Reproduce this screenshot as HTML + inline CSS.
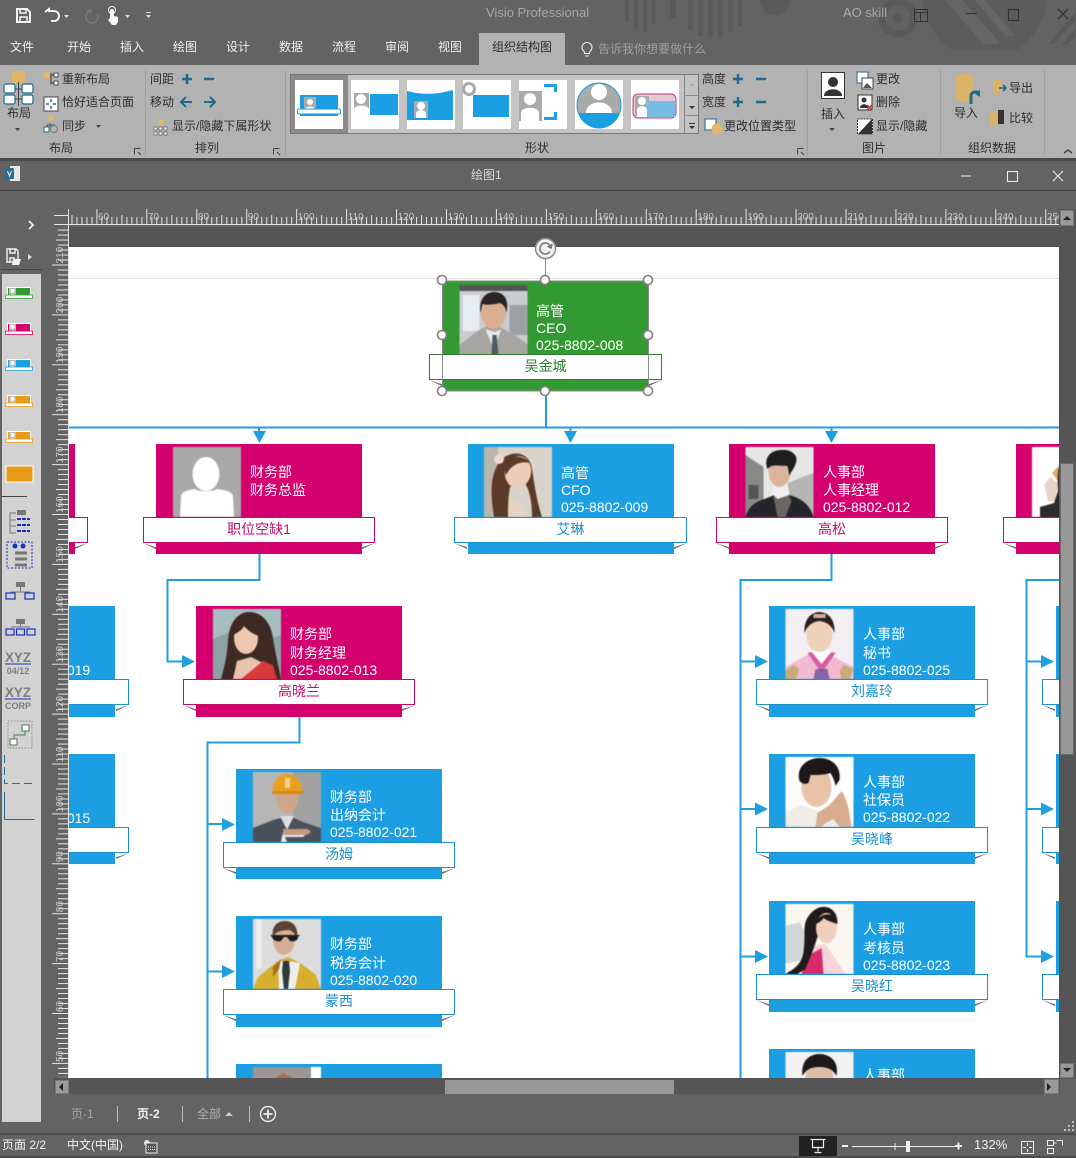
<!DOCTYPE html>
<html><head><meta charset="utf-8"><title>Visio Professional</title>
<style>
*{box-sizing:border-box}
html,body{margin:0;padding:0}
body{width:1076px;height:1158px;background:#636363;position:relative;overflow:hidden;font-family:"Liberation Sans","Noto Sans CJK SC",sans-serif;font-size:12px;color:#2e2e2e}
.a{position:absolute}
.t{position:absolute;white-space:nowrap;line-height:16px}
.w{color:#efefef}
.c{position:absolute;width:206px;height:110px}
.c.bl{background:#1b9fe2;color:#1b8fcf;border-color:#1b8fcf}
.c.pk{background:#d3006e;color:#c20a6c}
.c.gr{background:#339933;color:#2f7d2f}
.c.h{height:111px}
.c .ph{position:absolute;left:17px;top:3px;width:68px;height:70px;display:block;filter:blur(.4px)}
.c .l{position:absolute;left:94px;font-size:14px;line-height:18px;color:#fff;white-space:nowrap}
.c .l1{top:19px}.c .l2{top:37px}.c .l3{top:54px}
.c .b{position:absolute;left:-13px;top:73px;width:232px;height:26px;background:#fff;border:1px solid currentColor;text-align:center;font-size:14px;line-height:23px}
.c .b i{position:absolute;top:25px;width:13px;height:6px;background:#666}
.c .b i.x{left:-1px;clip-path:polygon(0 0,100% 70%,100% 100%)}
.c .b i.y{right:-1px;clip-path:polygon(100% 0,0 70%,0 100%)}
</style></head><body>

<!-- title bar decoration -->
<svg class="a" style="left:600px;top:0" width="476" height="65" viewBox="0 0 476 65">
<g fill="#5a5a5a">
<path d="M25 0h4v22h-4zM34 0h4v28h-4zM43 0h4v32h-4zM52 0h3v24h-3zM70 0h6v18h-6zM88 0h5v30h-5zM98 0h5v36h-5zM108 0h5v36h-5zM118 0h5v36h-5zM128 0h5v32h-5zM138 0h4v26h-4z"/>
<path d="M160 0h30a15 15 0 0 1-30 0z"/>
<circle cx="298" cy="18" r="16" fill="none" stroke="#5a5a5a" stroke-width="7"/>
<circle cx="298" cy="18" r="5"/>
<path d="M322 0h125a70 70 0 0 1-30 50h-65a70 70 0 0 1-30-50z" fill="#5c5c5c"/>
<path d="M345 0l38 44h18L362 0zM375 0l30 36h10L385 0z" fill="#666"/>
<path d="M476 12L448 44h6l22-24zM476 28l-14 16h6l8-8z"/>
</g></svg>

<!-- quick access toolbar -->
<svg class="a" style="left:14px;top:6px" width="150" height="20" viewBox="0 0 150 20">
<g fill="none" stroke="#f4f4f4" stroke-width="2"><path d="M3 3h10l3 3v10H3z"/><path d="M6 3v4h6V3M6 16v-5h7v5" stroke-width="1.500"/></g>
<path d="M33 6l4-3v2h5a5 5 0 0 1 0 10h-3" fill="none" stroke="#f4f4f4" stroke-width="2" transform="translate(-2 0)"/>
<path d="M50 9h5l-2.500 3z" fill="#e0e0e0"/>
<path d="M78 5a6 6 0 1 0 5 3M73 4l3 2v-3" fill="none" stroke="#777" stroke-width="1.500"/>
<path d="M96 12V5a2 2 0 0 1 4 0v5l4 1v5l-2 3h-4l-4-5z" fill="#f4f4f4"/><circle cx="98" cy="4" r="3.500" fill="none" stroke="#f4f4f4"/>
<path d="M111 9h5l-2.500 3z" fill="#e0e0e0"/>
<path d="M132 6h5v1h-5zM132 9h5l-2.500 3z" fill="#e0e0e0"/>
</svg>
<div class="t" style="left:486px;top:5px;font-size:13px;color:#a9a9a9">Visio Professional</div>
<div class="t" style="left:843px;top:5px;font-size:13px;color:#aaa">AO skill</div>
<svg class="a" style="left:910px;top:4px" width="166" height="20" viewBox="0 0 166 20" fill="none" stroke="#333" stroke-width="1">
<path d="M4.500 5.500h13v12h-13zM4.500 8.500h13M10.500 8.500v9"/><path d="M56 9.500h11" stroke-width="1.200"/><path d="M98.500 5.500h10v11h-10z" stroke-width="1.200"/><path d="M148 5l10 10M158 5l-10 10" stroke-width="1.300"/>
</svg>

<!-- tabs -->
<div class="t w" style="left:10px;top:39px">文件</div>
<div class="t w" style="left:67px;top:39px">开始</div>
<div class="t w" style="left:120px;top:39px">插入</div>
<div class="t w" style="left:173px;top:39px">绘图</div>
<div class="t w" style="left:226px;top:39px">设计</div>
<div class="t w" style="left:279px;top:39px">数据</div>
<div class="t w" style="left:332px;top:39px">流程</div>
<div class="t w" style="left:385px;top:39px">审阅</div>
<div class="t w" style="left:438px;top:39px">视图</div>
<div class="a" style="left:479px;top:33px;width:86px;height:32px;background:#b2b2b2"></div>
<div class="t" style="left:492px;top:39px">组织结构图</div>
<svg class="a" style="left:580px;top:41px" width="14" height="17" viewBox="0 0 14 17" fill="none" stroke="#eee" stroke-width="1.100"><path d="M4.500 11C3 9.500 2 8.500 2 6.500a5 5 0 0 1 10 0c0 2-1 3-2.500 4.500v1.500h-5zM5 15h4"/></svg>
<div class="t" style="left:598px;top:41px;color:#a0a0a0">告诉我你想要做什么</div>

<!-- ribbon -->
<div class="a" style="left:0;top:65px;width:1076px;height:93px;background:#b2b2b2"></div>
<div class="a" style="left:0;top:158px;width:1076px;height:3px;background:#4a4a4a"></div>
<div class="a" style="left:145px;top:70px;width:1px;height:86px;background:#a0a0a0"></div>
<div class="a" style="left:285px;top:70px;width:1px;height:86px;background:#a0a0a0"></div>
<div class="a" style="left:807px;top:70px;width:1px;height:86px;background:#a0a0a0"></div>
<div class="a" style="left:940px;top:70px;width:1px;height:86px;background:#a0a0a0"></div>
<div class="a" style="left:1044px;top:70px;width:1px;height:86px;background:#a0a0a0"></div>

<!-- layout group -->
<svg class="a" style="left:0;top:68px" width="145" height="68" viewBox="0 0 145 68">
<rect x="12" y="3" width="13" height="12" rx="2" fill="#e2b868"/>
<g fill="#fff" stroke="#1f6a8c" stroke-width="1.200"><rect x="4" y="16" width="11" height="9" rx="2"/><rect x="22" y="16" width="11" height="9" rx="2"/><rect x="4" y="27" width="11" height="9" rx="2"/><rect x="22" y="27" width="11" height="9" rx="2"/></g>
<path d="M18.500 14v24M15 21h7M15 31h7" stroke="#444" fill="none"/>
<path d="M15 60h5l-2.500 3z" fill="#444"/>
<circle cx="47" cy="7" r="3.500" fill="#e2b868"/><path d="M51 5v11M51 7h3M51 15h3" stroke="#333" fill="none"/><rect x="54" y="5" width="4" height="4" fill="#fff" stroke="#333" stroke-width=".8"/><rect x="54" y="13" width="4" height="4" fill="#fff" stroke="#333" stroke-width=".8"/>
<rect x="44" y="29" width="14" height="14" fill="#fff" stroke="#444"/><path d="M51 31v3M51 38v3M46 36h3M53 36h3" stroke="#1f6a8c" stroke-width="1.500"/>
<circle cx="51" cy="50" r="3" fill="#e2b868"/><rect x="44" y="59" width="5" height="5" fill="#fff" stroke="#1f6a8c"/><path d="M50 55v4M47 59v-2h8" stroke="#555" fill="none"/><circle cx="54" cy="61" r="3.500" fill="none" stroke="#777"/>
<path d="M96 61h5l-2.500 3z" transform="translate(0 -4)" fill="#444"/>
</svg>
<div class="t" style="left:7px;top:105px">布局</div>
<div class="t" style="left:62px;top:71px">重新布局</div>
<div class="t" style="left:62px;top:94px">恰好适合页面</div>
<div class="t" style="left:62px;top:118px">同步</div>
<div class="t" style="left:49px;top:140px">布局</div>
<div class="t" style="left:195px;top:140px">排列</div>
<div class="t" style="left:525px;top:140px">形状</div>
<div class="t" style="left:862px;top:140px">图片</div>
<div class="t" style="left:968px;top:140px">组织数据</div>
<svg class="a" style="left:0;top:146px" width="1076" height="12" viewBox="0 0 1076 12" fill="none" stroke="#444" stroke-width="1">
<path d="M134.500 2.500h6M134.500 2.500v6M138 6l3 3" /><path d="M273.500 2.500h6M273.500 2.500v6M277 6l3 3"/><path d="M797.500 2.500h6M797.500 2.500v6M801 6l3 3"/><path d="M1064 7l4-3 4 3" stroke-width="1.500"/>
</svg>

<!-- arrange group -->
<div class="t" style="left:150px;top:71px">间距</div>
<div class="t" style="left:150px;top:94px">移动</div>
<svg class="a" style="left:178px;top:70px" width="42" height="42" viewBox="0 0 42 42" fill="none" stroke="#1f6a8c" stroke-width="2.600">
<path d="M9 4v10M4 9h10M26 9h10"/><path d="M14 32H4M8 27l-5 5 5 5M26 32h10M32 27l5 5-5 5" stroke-width="2"/></svg>
<svg class="a" style="left:152px;top:118px" width="18" height="18" viewBox="0 0 18 18"><circle cx="9" cy="4" r="3" fill="#e2b868"/><g fill="#fff" stroke="#444" stroke-width=".6"><rect x="2" y="9" width="3" height="3"/><rect x="7" y="9" width="3" height="3"/><rect x="12" y="9" width="3" height="3"/><rect x="2" y="14" width="3" height="3"/><rect x="7" y="14" width="3" height="3"/><rect x="12" y="14" width="3" height="3"/></g></svg>
<div class="t" style="left:172px;top:118px">显示/隐藏下属形状</div>

<!-- gallery -->
<div class="a" style="left:290px;top:74px;width:409px;height:60px;background:#c4c4c4;border:1px solid #777"></div>
<div class="a" style="left:291px;top:75px;width:57px;height:58px;background:#8a8a8a"></div>
<div class="a" style="left:295px;top:80px;width:48px;height:49px;background:#fff"></div>
<div class="a" style="left:351px;top:80px;width:48px;height:49px;background:#fff"></div>
<div class="a" style="left:407px;top:80px;width:48px;height:49px;background:#fff"></div>
<div class="a" style="left:463px;top:80px;width:48px;height:49px;background:#fff"></div>
<div class="a" style="left:519px;top:80px;width:48px;height:49px;background:#fff"></div>
<div class="a" style="left:575px;top:80px;width:48px;height:49px;background:#fff"></div>
<div class="a" style="left:631px;top:80px;width:48px;height:49px;background:#fff"></div>
<svg class="a" style="left:290px;top:75px" width="410" height="58" viewBox="0 0 410 58">
<!-- t1 -->
<rect x="10" y="20" width="38" height="21" fill="#1b9fe2"/><rect x="14" y="22" width="12" height="15" fill="#aaa"/><circle cx="20" cy="27" r="3" fill="#fff"/><path d="M16 37v-4c0-2 8-2 8 0v4z" fill="#fff"/><rect x="7.500" y="34" width="43" height="5" rx="1" fill="#fff" stroke="#1b9fe2"/>
<!-- t2 -->
<rect x="80" y="19" width="28" height="21" fill="#1b9fe2"/><rect x="64" y="18" width="15" height="22" fill="#aaa"/><circle cx="71" cy="24" r="5" fill="#fff"/><path d="M64 40v-5c0-6 15-6 15 0v5z" fill="#fff"/>
<!-- t3 -->
<path d="M118 16q22 6 46-1v30h-46z" fill="#1b9fe2" transform="translate(-1 0)"/><rect x="124" y="26" width="14" height="17" fill="#aaa"/><circle cx="131" cy="31" r="4" fill="#fff"/><path d="M126 43v-4c0-5 10-5 10 0v4z" fill="#fff"/>
<!-- t4 -->
<rect x="186" y="20" width="36" height="22" fill="#1b9fe2" transform="translate(-3 0)"/><circle cx="182" cy="14" r="7" fill="#aaa" transform="translate(-3 0)"/><circle cx="179" cy="14" r="4" fill="#fff"/>
<!-- t5 -->
<rect x="229" y="16" width="23" height="30" fill="#aaa"/><circle cx="240" cy="24" r="6" fill="#fff"/><path d="M231 46V38c0-7 18-7 18 0v8z" fill="#fff"/><path d="M254 9h12v3h-12zM254 42h12v3h-12zM264 9h3v8h-3zM264 37h3v8h-3z" fill="#1b9fe2"/>
<!-- t6 -->
<circle cx="309" cy="30" r="22" fill="#aaa" stroke="#1b9fe2"/><path d="M288 38h42a22 22 0 0 1-42 0z" fill="#1b9fe2"/><circle cx="309" cy="17" r="8" fill="#fff"/><path d="M296 38c0-14 26-14 26 0z" fill="#fff"/>
<!-- t7 -->
<rect x="343" y="19" width="43" height="24" rx="5" fill="#e6c7d6" stroke="#c2377f" stroke-width="1"/><rect x="345" y="21" width="14" height="20" fill="#aaa"/><rect x="356" y="26" width="29" height="16" fill="#76bde2"/><circle cx="352" cy="26" r="4" fill="#fff"/><path d="M347 42v-7c0-5 10-5 10 0v7z" fill="#fff"/>
</svg>
<div class="a" style="left:684px;top:75px;width:14px;height:58px;background:#c4c4c4;border-left:1px solid #888"></div>
<div class="a" style="left:684px;top:95px;width:14px;height:1px;background:#888"></div>
<div class="a" style="left:684px;top:115px;width:14px;height:1px;background:#888"></div>
<svg class="a" style="left:684px;top:75px" width="15" height="58" viewBox="0 0 15 58"><path d="M5 11h6l-3-3z" fill="#aaa"/><path d="M5 31h6l-3 3z" fill="#333"/><path d="M5 48h6v1H5zM5 51h6l-3 3z" fill="#333"/></svg>

<!-- size -->
<div class="t" style="left:702px;top:71px">高度</div>
<div class="t" style="left:702px;top:94px">宽度</div>
<svg class="a" style="left:730px;top:70px" width="40" height="40" viewBox="0 0 40 40" fill="none" stroke="#1f6a8c" stroke-width="2.400"><path d="M8 4v10M3 9h10M26 9h10M8 27v10M3 32h10M26 32h10"/></svg>
<svg class="a" style="left:704px;top:118px" width="20" height="17" viewBox="0 0 20 17"><rect x="1" y="1" width="11" height="11" fill="#fff" stroke="#1f6a8c"/><circle cx="13" cy="11" r="5.500" fill="#e2b868"/></svg>
<div class="t" style="left:724px;top:118px">更改位置类型</div>

<!-- picture -->
<svg class="a" style="left:820px;top:72px" width="28" height="30" viewBox="0 0 28 30"><rect x=".5" y="3.500" width="23" height="26" fill="#fff" stroke="#333" transform="translate(1 -3)"/><circle cx="13" cy="10" r="5" fill="#333"/><path d="M4 24c0-9 18-9 18 0z" fill="#333"/></svg>
<div class="t" style="left:821px;top:106px">插入</div>
<svg class="a" style="left:829px;top:128px" width="8" height="5" viewBox="0 0 8 5"><path d="M0 0h6L3 3z" fill="#444"/></svg>
<svg class="a" style="left:856px;top:71px" width="18" height="66" viewBox="0 0 18 66">
<rect x="1" y="1" width="11" height="11" fill="#fff" stroke="#1f6a8c"/><rect x="6" y="7" width="11" height="11" fill="#fff" stroke="#444"/><path d="M7 17l4-5 5 5z" fill="#555"/>
<rect x="2" y="24" width="14" height="15" fill="#fff" stroke="#333"/><circle cx="8" cy="29" r="2.500" fill="#333"/><path d="M4 37c0-5 8-5 8 0z" fill="#333"/><path d="M11 34l5 5M16 34l-5 5" stroke="#c33" stroke-width="1.500"/>
<rect x="1.500" y="48" width="15" height="15" fill="#fff" stroke="#333" stroke-dasharray="2 1"/><path d="M2 63L16 48v15z" fill="#333"/>
</svg>
<div class="t" style="left:876px;top:71px">更改</div>
<div class="t" style="left:876px;top:94px">删除</div>
<div class="t" style="left:876px;top:118px">显示/隐藏</div>

<!-- org data -->
<svg class="a" style="left:953px;top:72px" width="85" height="60" viewBox="0 0 85 60">
<path d="M3 5c0-4 18-4 18 0v22c0 4-18 4-18 0z" fill="#d9b36a"/><path d="M18 32v-8c0-4 5-5 7-3" fill="none" stroke="#1f6a8c" stroke-width="3"/><path d="M21 21l6-3 0 7z" fill="#1f6a8c"/>
<path d="M40 9c0-3 9-3 9 0v11c0 3-9 3-9 0z" fill="#d9b36a"/><path d="M46 16h6M50 13l3 3-3 3" fill="none" stroke="#1f6a8c" stroke-width="1.600"/>
<path d="M37 42c0-3 8-3 8 0v10c0 3-8 3-8 0z" fill="#d9b36a"/><rect x="45" y="38" width="6" height="14" fill="#333"/>
</svg>
<div class="t" style="left:954px;top:105px">导入</div>
<div class="t" style="left:1009px;top:80px">导出</div>
<div class="t" style="left:1009px;top:110px">比较</div>

<!-- doc title bar -->
<svg class="a" style="left:5px;top:165px" width="16" height="18" viewBox="0 0 16 18"><rect x="5" y="1" width="10" height="15" fill="#e8e8e8"/><rect x="0" y="3" width="9" height="11" rx="1" fill="#2a6c93"/><path d="M2.500 6l2 5 2-5" fill="none" stroke="#fff" stroke-width="1"/></svg>
<div class="t" style="left:471px;top:167px;color:#d8d8d8">绘图1</div>
<svg class="a" style="left:950px;top:166px" width="126" height="20" viewBox="0 0 126 20" fill="none" stroke="#ececec" stroke-width="1.100"><path d="M11 10h10"/><path d="M57.500 5.500h10v10h-10z"/><path d="M103 5l10 10M113 5l-10 10"/></svg>
<div class="a" style="left:0;top:190px;width:1076px;height:1px;background:#444"></div>

<!-- left panel -->
<svg class="a" style="left:27px;top:220px" width="10" height="10" viewBox="0 0 10 10"><path d="M2 1l4 4-4 4" fill="none" stroke="#eee" stroke-width="1.800"/></svg>
<svg class="a" style="left:5px;top:247px" width="30" height="20" viewBox="0 0 30 20"><g fill="none" stroke="#f2f2f2" stroke-width="1.400"><path d="M2 2h9l2 2v11H2z"/><path d="M5 2v4h5V2M5 15v-4h5"/></g><path d="M8 12h8l-2 6H7z" fill="#f2f2f2"/><path d="M23 7l4 3-4 3z" fill="#ddd"/></svg>
<div class="a" style="left:1px;top:269px;width:41px;height:1px;background:#444"></div>
<div class="a" style="left:2px;top:274px;width:39px;height:848px;background:#d2d2d2"></div>
<svg class="a" style="left:2px;top:274px" width="40" height="560" viewBox="0 0 40 560">
<g><rect x="5" y="13" width="24" height="11" fill="#fff"/><rect x="6" y="14" width="22" height="9" fill="#339933"/><rect x="7" y="14" width="7" height="9" fill="#bbb"/><circle cx="10.500" cy="17" r="2" fill="#fff"/><path d="M8 23c0-4 5-4 5 0z" fill="#fff"/><rect x="3.500" y="21" width="27" height="3.500" fill="#fff" stroke="#339933" stroke-width=".8"/></g>
<g transform="translate(0 36)"><rect x="5" y="13" width="24" height="11" fill="#fff"/><rect x="6" y="14" width="22" height="9" fill="#d3006e"/><rect x="7" y="14" width="7" height="9" fill="#bbb"/><circle cx="10.500" cy="17" r="2" fill="#fff"/><path d="M8 23c0-4 5-4 5 0z" fill="#fff"/><rect x="3.500" y="21" width="27" height="3.500" fill="#fff" stroke="#d3006e" stroke-width=".8"/></g>
<g transform="translate(0 72)"><rect x="5" y="13" width="24" height="11" fill="#fff"/><rect x="6" y="14" width="22" height="9" fill="#1b9fe2"/><rect x="7" y="14" width="7" height="9" fill="#bbb"/><circle cx="10.500" cy="17" r="2" fill="#fff"/><path d="M8 23c0-4 5-4 5 0z" fill="#fff"/><rect x="3.500" y="21" width="27" height="3.500" fill="#fff" stroke="#1b9fe2" stroke-width=".8"/></g>
<g transform="translate(0 108)"><rect x="5" y="13" width="24" height="11" fill="#fff"/><rect x="6" y="14" width="22" height="9" fill="#e99a16"/><rect x="7" y="14" width="7" height="9" fill="#bbb"/><circle cx="10.500" cy="17" r="2" fill="#fff"/><path d="M8 23c0-4 5-4 5 0z" fill="#fff"/><rect x="3.500" y="21" width="27" height="3.500" fill="#fff" stroke="#e99a16" stroke-width=".8"/></g>
<g transform="translate(0 144)"><rect x="5" y="13" width="24" height="11" fill="#fff"/><rect x="6" y="14" width="22" height="9" fill="#e99a16"/><rect x="7" y="14" width="7" height="9" fill="#bbb"/><circle cx="10.500" cy="17" r="2" fill="#fff"/><path d="M8 23c0-4 5-4 5 0z" fill="#fff"/><rect x="3.500" y="21" width="27" height="3.500" fill="#fff" stroke="#e99a16" stroke-width=".8"/></g>
<rect x="4" y="192" width="27" height="16" fill="#e99a16" stroke="#fff"/>
<path d="M-2 222.500h27" stroke="#444"/>
<!-- tree -->
<rect x="15" y="236" width="9" height="5" fill="#777"/><path d="M14 239H8v20h6M8 246h6M8 252h6" fill="none" stroke="#777"/><path d="M15 245h13M15 251h13M15 257h13" stroke="#1b30c0" stroke-width="2" stroke-dasharray="4 1"/>
<rect x="5" y="268" width="25" height="26" fill="none" stroke="#1b30c0" stroke-dasharray="2 1.500"/><circle cx="13" cy="272" r="2.500" fill="#1b30c0"/><circle cx="21" cy="272" r="2.500" fill="#1b30c0"/><path d="M13 279h12M13 285h12M13 291h12" stroke="#777" stroke-width="3"/>
<!-- horiz -->
<rect x="14" y="308" width="9" height="5" fill="#777"/><path d="M18.500 313v5M9 318h19" stroke="#777"/><rect x="4" y="319" width="9" height="6" fill="none" stroke="#1b30c0" stroke-width="1.200"/><rect x="23" y="319" width="9" height="6" fill="none" stroke="#1b30c0" stroke-width="1.200"/>
<rect x="14" y="345" width="9" height="5" fill="#777"/><path d="M18.500 350v3M9 353h19" stroke="#777"/><rect x="4" y="355" width="8" height="6" fill="none" stroke="#1b30c0" stroke-width="1.200"/><rect x="14.500" y="355" width="8" height="6" fill="none" stroke="#1b30c0" stroke-width="1.200"/><rect x="25" y="355" width="8" height="6" fill="none" stroke="#1b30c0" stroke-width="1.200"/>
<path d="M3 390h26M3 425h26" stroke="#1b30c0" stroke-width="1"/>
<!-- group -->
<rect x="6" y="447" width="24" height="27" fill="none" stroke="#888" stroke-dasharray="1.500 1.500"/><rect x="20" y="451" width="7" height="6" fill="#fff" stroke="#4a7a4a"/><rect x="8" y="465" width="7" height="6" fill="#fff" stroke="#4a7a4a"/><path d="M23 457v4H12v4" fill="none" stroke="#4a7a4a"/>
<!-- callouts -->
<path d="M2.500 481v28.500h30" fill="none" stroke="#2d6e8e" stroke-dasharray="8 4"/><path d="M2.500 518v27.500h30" fill="none" stroke="#2d6e8e"/>
<text x="16" y="388" text-anchor="middle" font-family="Liberation Sans" font-size="14" font-weight="bold" fill="#7d7d7d" textLength="26" lengthAdjust="spacingAndGlyphs">XYZ</text>
<text x="16" y="400" text-anchor="middle" font-family="Liberation Sans" font-size="9" font-weight="bold" fill="#7d7d7d">04/12</text>
<text x="16" y="423" text-anchor="middle" font-family="Liberation Sans" font-size="14" font-weight="bold" fill="#7d7d7d" textLength="26" lengthAdjust="spacingAndGlyphs">XYZ</text>
<text x="16" y="435" text-anchor="middle" font-family="Liberation Sans" font-size="9" font-weight="bold" fill="#7d7d7d">CORP</text>
</svg>

<!-- dark desk around page -->
<div class="a" style="left:54px;top:227px;width:1006px;height:851px;background:#555"></div>

<!-- canvas -->
<div class="a" style="left:69px;top:247px;width:990px;height:831px;background:#fff;overflow:hidden">
<div class="a" style="left:-69px;top:-247px;width:1076px;height:1158px">
<div class="a" style="left:69px;top:278px;width:990px;height:1px;background:#e2e2e2"></div>
<svg class="a" style="left:0;top:0" width="1076" height="1158" viewBox="0 0 1076 1158">
<g fill="none" stroke="#1f9fe0" stroke-width="2">
<path d="M69 427.500H1059M546 391v36M259 428v6M570.500 428v6M831.500 428v6"/>
<path d="M259.500 554v26H167.500v81.500H182"/>
<path d="M299.500 717v25.500H207.500V1080M207.500 824h16M207.500 971.500h16"/>
<path d="M831.500 554v26H740.500V1080M740.500 661.500h16M740.500 809h16M740.500 956.500h16"/>
<path d="M1060 580H1026.500V956.500h16M1026.500 661.500h16M1026.500 809h16"/>
</g>
<g fill="#1f9fe0">
<path d="M253 431h13l-6.500 12zM564 431h13l-6.500 12zM825 431h13l-6.500 12z"/>
<path d="M182 655v13l13-6.500zM222 818v13l13-6.500zM222 965v13l13-6.500zM755 655v13l13-6.500zM755 802.500v13l13-6.500zM755 950v13l13-6.500zM1041 655v13l13-6.500zM1041 802.500v13l13-6.500zM1041 950v13l13-6.500z"/>
</g>
</svg>

<!-- CEO -->
<div class="c gr" style="left:443px;top:281px">
<svg class="ph" style="left:16px;top:4px;width:69px" viewBox="0 0 68 70"><rect width="68" height="70" fill="#c9ccd0"/><rect width="68" height="6" fill="#555"/><rect x="3" y="10" width="17" height="36" fill="#e8edf2"/><rect x="50" y="20" width="18" height="30" fill="#9ea1a4"/><path d="M0 70V60l18-14 10-5h10l12 6 18 12v11z" fill="#a7a5a1"/><path d="M26 44l8 20 8-20-7 3z" fill="#e6e8ec"/><path d="M33 50h4l2 20h-7z" fill="#4f5a62"/><ellipse cx="34" cy="27" rx="12.500" ry="17" fill="#dcae90"/><path d="M21 28c-2-14 5-21 14-21s15 7 12 21c-1-7-4-9-7-10-6 2-14 2-17 1z" fill="#2a2423"/></svg>
<div class="l" style="left:93px;top:21px">高管</div><div class="l" style="left:93px;top:38px">CEO</div><div class="l" style="left:93px;top:55px">025-8802-008</div>
<div class="b" style="left:-14px;top:73px;width:233px"><i class="x"></i><i class="y"></i>吴金城</div>
</div>

<!-- row 1 -->
<div class="c pk" style="left:-131px;top:444px"><div class="b"><i class="x"></i><i class="y"></i></div></div>
<div class="c pk" style="left:156px;top:444px">
<svg class="ph" viewBox="0 0 68 70"><rect width="68" height="70" fill="#a9a9a9"/><ellipse cx="33" cy="27" rx="13.500" ry="17" fill="#fff"/><path d="M7 70l1-21c1-5 8-6 14-7 3 3 17 3 22 0 7 1 15 2 16 7l1 21z" fill="#fff"/></svg>
<div class="l l1">财务部</div><div class="l l2">财务总监</div>
<div class="b"><i class="x"></i><i class="y"></i>职位空缺1</div>
</div>
<div class="c bl" style="left:468px;top:444px">
<svg class="ph" style="left:16px" viewBox="0 0 68 70"><rect width="68" height="70" fill="#d8d4c9"/><rect width="14" height="70" fill="#b9b7ac"/><path d="M42 70c-5-20-22-22-28-10l-2 10z" fill="#e9d2bf"/><path d="M10 70c-4-25-4-45 8-58 12-10 28-6 30 10 2 12 4 30 10 48H48C48 50 44 40 40 35L26 40c-2 10-2 20-2 30z" fill="#5c3a28"/><ellipse cx="34" cy="25" rx="13" ry="16" fill="#efcdb8" transform="rotate(10 34 25)"/><path d="M20 20C22 8 38 6 46 16 38 14 28 16 22 28z" fill="#5c3a28"/><circle cx="15" cy="12" r="5" fill="#f0d8d0"/></svg>
<div class="l" style="left:93px;top:20px">高管</div><div class="l" style="left:93px;top:37px">CFO</div><div class="l" style="left:93px;top:54px">025-8802-009</div>
<div class="b" style="left:-14px;width:233px"><i class="x"></i><i class="y"></i>艾琳</div>
</div>
<div class="c pk" style="left:729px;top:444px">
<svg class="ph" style="left:16px;width:69px" viewBox="0 0 68 70"><rect width="68" height="70" fill="#e6e6e6"/><path d="M0 8l18 12v50H0z" fill="#888a85"/><rect x="3" y="38" width="10" height="14" fill="#555"/><path d="M42 36l26-10v44H42z" fill="#b5b5b3"/><path d="M0 70c4-14 14-16 24-20l10-4 10 2c10 3 20 8 24 22z" fill="#23252a"/><path d="M28 50c2-6 10-8 14-4l4 8-6 16H32z" fill="#6a6664"/><path d="M28 36l-2 10 6 6 12-4-2-12z" fill="#eee"/><ellipse cx="34" cy="24" rx="11" ry="16" fill="#dcb49c"/><path d="M22 22C18 12 24 3 36 3c10-1 18 6 14 14-2 6-5 8-6 12l-2-10c-6 0-12-1-16 0-2 1-3 2-4 3z" fill="#1e1e20"/></svg>
<div class="l l1">人事部</div><div class="l l2">人事经理</div><div class="l l3">025-8802-012</div>
<div class="b"><i class="x"></i><i class="y"></i>高松</div>
</div>
<div class="c pk" style="left:1016px;top:444px">
<svg class="ph" style="left:16px" viewBox="0 0 68 70"><rect width="68" height="70" fill="#fff"/><path d="M20 26l5-6 5 8-3 8z" fill="#e0b264"/><path d="M12 38l6-8 8 6-2 18h-8z" fill="#e7d3c8"/><path d="M8 70v-10l14-4 4-12c-1-20 0-30 8-36l34 0v62z" fill="#2c2c2e"/></svg>
<div class="b"><i class="x"></i><i class="y"></i></div>
</div>

<!-- left blue -->
<div class="c bl h" style="left:-91px;top:606px"><div class="l" style="left:112px;top:37px">理</div><div class="l l3" style="top:55px">025-8802-019</div><div class="b" style="width:233px"><i class="x"></i><i class="y"></i></div></div>
<div class="c bl" style="left:-91px;top:754px"><div class="l" style="left:112px;top:37px">师</div><div class="l l3" style="top:55px">025-8802-015</div><div class="b" style="width:233px"><i class="x"></i><i class="y"></i></div></div>

<!-- 高晓兰 -->
<div class="c pk h" style="left:196px;top:606px">
<svg class="ph" viewBox="0 0 68 70"><rect width="68" height="70" fill="#a6bec0"/><path d="M0 30l20-8 20 12 28-8v44H0z" fill="#8ba3a5"/><path d="M8 70c4-14 6-24 7-38C16 12 26 3 36 3c14 0 22 12 24 26 2 14 6 30 8 41H52L38 50 24 60l-2 10z" fill="#3e2a22"/><path d="M20 70l4-18 14-4 12 6 6 16z" fill="#e8c4ae"/><path d="M28 70l22-18 10 4 4 14z" fill="#d83a3c"/><ellipse cx="33" cy="29" rx="12" ry="16" fill="#eec8ae"/><path d="M20 26c2-10 12-16 20-13 4 2 6 8 6 14-6-2-12-6-15-10-2 4-7 7-11 9z" fill="#3e2a22"/></svg>
<div class="l l1">财务部</div><div class="l" style="top:38px">财务经理</div><div class="l" style="top:55px">025-8802-013</div>
<div class="b"><i class="x"></i><i class="y"></i>高晓兰</div>
</div>

<!-- 财务 children -->
<div class="c bl" style="left:236px;top:769px">
<svg class="ph" viewBox="0 0 68 70"><rect width="68" height="70" fill="#b6b6b6"/><rect x="40" width="28" height="70" fill="#8e8e8e" opacity=".5"/><path d="M0 70V56l20-8 16-4 14 6 18 6v14z" fill="#4c505b"/><path d="M27 44l7 14 7-14z" fill="#dadee0"/><path d="M30 60h26l-6 5H32l2 5h-6z" fill="#e8e8e8"/><path d="M30 57h25l3 3-4 3H30z" fill="#c39a80"/><ellipse cx="34" cy="26" rx="11" ry="15" fill="#cfa587"/><path d="M20 18c0-10 6-16 14-16s15 6 15 16l2 3-32 1z" fill="#e99f1f"/><path d="M19 19h32v3H19z" fill="#d28a12"/><path d="M32 6h5v10h-5z" fill="#f6d190"/></svg>
<div class="l l1">财务部</div><div class="l l2">出纳会计</div><div class="l" style="top:54px">025-8802-021</div>
<div class="b"><i class="x"></i><i class="y"></i>汤姆</div>
</div>
<div class="c bl" style="left:236px;top:916px;height:111px">
<svg class="ph" viewBox="0 0 68 70"><rect width="68" height="70" fill="#dcdcdc"/><rect x="3" width="6" height="50" fill="#eee"/><path d="M0 70l5-12 20-16 10-4 12 6 16 12 5 14z" fill="#d8ae2e"/><path d="M25 42l9 0 13 2-5 26H26z" fill="#efefef"/><path d="M30 42h6l1 10-2 18h-4l-2-18z" fill="#2f3a3a"/><path d="M20 48l8-8-2 10-6 8z" fill="#a86c22"/><ellipse cx="31" cy="20" rx="11" ry="16" fill="#d6ad96"/><path d="M20 18c-2-10 4-16 12-16s14 6 12 18c-2-5-4-8-8-9-4 0-10 1-13 3z" fill="#5b4436"/><path d="M17 16h30l-2 2c0 4-5 5-8 4l-3-4h-3l-3 4c-3 1-8 0-9-4z" fill="#1c1c1c"/></svg>
<div class="l l1">财务部</div><div class="l" style="top:38px">税务会计</div><div class="l" style="top:55px">025-8802-020</div>
<div class="b"><i class="x"></i><i class="y"></i>蒙西</div>
</div>
<div class="c bl" style="left:236px;top:1064px">
<svg class="ph" viewBox="0 0 68 70"><rect width="68" height="70" fill="#fff"/><rect width="58" height="70" fill="#9c9694"/><path d="M18 14l12-8 12 6-6 8z" fill="#b36c3e"/></svg>
<div class="l l1">财务部</div>
</div>

<!-- 人事 children -->
<div class="c bl h" style="left:769px;top:606px">
<svg class="ph" style="left:16px;width:69px" viewBox="0 0 68 70"><rect width="68" height="70" fill="#f3eff2"/><path d="M0 70V58l22-12 10-4 12 4 24 12v12z" fill="#f2b9d0"/><path d="M22 44l14 20 14-20-4-1-10 12-10-12z" fill="#d65ca0"/><path d="M26 42l10 13 10-13-10-4z" fill="#fff"/><path d="M0 62l8-6 6 4-4 10H0zM64 70l4-10-10-4-4 6 2 8z" fill="#b8a24e" opacity=".7"/><path d="M30 60h12l2 10H28z" fill="#6a4fa0" opacity=".8"/><ellipse cx="34" cy="26" rx="13" ry="17" fill="#efd0b8"/><path d="M19 24C18 10 26 3 34 3s16 7 15 21c-3-8-8-11-15-12-7 1-12 4-15 12z" fill="#2a2020"/><path d="M28 5h12v4H28z" fill="#d9a9a9"/></svg>
<div class="l l1">人事部</div><div class="l l2" style="top:38px">秘书</div><div class="l" style="top:55px">025-8802-025</div>
<div class="b"><i class="x"></i><i class="y"></i>刘嘉玲</div>
</div>
<div class="c bl" style="left:769px;top:754px">
<svg class="ph" style="left:16px;width:69px" viewBox="0 0 68 70"><rect width="68" height="70" fill="#fff"/><path d="M0 70V56l14-8 20 6 24-2 10 18z" fill="#f0ece6"/><path d="M30 70l2-14 12-8 12-14c6 8 8 22 10 36H54l-6-8-8 4-4 4z" fill="#d9ac90"/><ellipse cx="31" cy="30" rx="15" ry="20" fill="#e8c3a8"/><path d="M14 24C10 10 22 1 34 1c12 0 22 8 20 22l-4 6c-1-6-3-9-5-13-6 2-14 2-20 2l-2 8c-4 2-7 0-9-2z" fill="#1d1817"/></svg>
<div class="l l1">人事部</div><div class="l l2" style="top:37px">社保员</div><div class="l" style="top:54px">025-8802-022</div>
<div class="b"><i class="x"></i><i class="y"></i>吴晓峰</div>
</div>
<div class="c bl h" style="left:769px;top:901px">
<svg class="ph" style="left:16px;width:69px" viewBox="0 0 68 70"><rect width="68" height="70" fill="#fbf7f0"/><path d="M0 22l14-4 10 16-6 22-18 4z" fill="#c8d0d4" opacity=".8"/><path d="M16 70l10-28 14-2 20 30z" fill="#f6d4d8"/><path d="M16 70l6-18 14-8 2 26z" fill="#d92a6c"/><path d="M0 70c6-4 16-8 18-22 2-14 0-22 2-30C24 8 32 2 40 3c8 1 12 8 12 16-2 2-10 4-16 2l-8 24-8 20-8 5z" fill="#201a1a"/><ellipse cx="41" cy="24" rx="10.500" ry="15" fill="#f0cfbc"/><path d="M30 20c2-8 10-12 20-8l2 8c-6-2-12-4-14-6-2 3-5 5-8 6z" fill="#201a1a"/></svg>
<div class="l l1">人事部</div><div class="l l2" style="top:38px">考核员</div><div class="l" style="top:55px">025-8802-023</div>
<div class="b"><i class="x"></i><i class="y"></i>吴晓红</div>
</div>
<div class="c bl" style="left:769px;top:1049px">
<svg class="ph" style="left:16px;width:69px" viewBox="0 0 68 70"><rect width="68" height="70" fill="#f2f2f2"/><ellipse cx="34" cy="26" rx="14" ry="18" fill="#e2bda6"/><path d="M17 24C15 8 25 2 34 2s20 6 17 22c-3-6-8-9-17-9s-14 3-17 9z" fill="#1e1818"/></svg>
<div class="l" style="top:17px">人事部</div>
</div>

<!-- right partials -->
<div class="c bl h" style="left:1056px;top:606px"><div class="b" style="left:-14px"><i class="x"></i></div></div>
<div class="c bl" style="left:1056px;top:754px"><div class="b" style="left:-14px"><i class="x"></i></div></div>
<div class="c bl h" style="left:1056px;top:901px"><div class="b" style="left:-14px"><i class="x"></i></div></div>

<!-- selection handles -->
<svg class="a" style="left:0;top:0" width="1076" height="500" viewBox="0 0 1076 500">
<path d="M442.500 281V391H648.500V281z" fill="none" stroke="#8a8a8a" stroke-width="1"/>
<path d="M545.500 255v25" stroke="#8a8a8a" stroke-width="1"/>
<g fill="#fff" stroke="#808080" stroke-width="1.600">
<circle cx="442" cy="280" r="4.500"/><circle cx="545" cy="280" r="4.500"/><circle cx="648" cy="280" r="4.500"/>
<circle cx="442" cy="335" r="4.500"/><circle cx="648" cy="335" r="4.500"/>
<circle cx="442" cy="391" r="4.500"/><circle cx="545" cy="391" r="4.500"/><circle cx="648" cy="391" r="4.500"/></g>
</svg>
</div></div>

<!-- rotate handle (crosses the page edge) -->
<svg class="a" style="left:533px;top:236px" width="26" height="24" viewBox="0 0 26 24"><circle cx="12.500" cy="12.500" r="10" fill="#f2f2f2" stroke="#8a8a8a" stroke-width="1.500"/><path d="M17 15.500a5.500 5.500 0 1 1 .5-5M19 8l-1 4-3.500-2" fill="none" stroke="#777" stroke-width="1.600"/></svg>

<!-- rulers -->
<div class="a" style="left:54px;top:209px;width:1006px;height:18px;background:#636363"></div>
<div class="a" style="left:52px;top:227px;width:17px;height:851px;background:#636363"></div>
<svg class="a" style="left:0;top:209px" width="1060" height="18" viewBox="0 0 1060 18">
<defs><pattern id="tp" patternUnits="userSpaceOnUse" x="96.400" y="0" width="49.940" height="18"><path d="M.5 0v15M5.500 8v7M10.500 8v7M15.500 8v7M20.500 8v7M25.500 6v9M30.500 8v7M35.500 8v7M40.500 8v7M45.500 8v7" stroke="#e6e6e6" stroke-width="1" fill="none"/></pattern></defs>
<rect x="69" y="0" width="991" height="15" fill="url(#tp)"/>
<path d="M54 15.500H1060M68.500 0V18M54 6.500H68" stroke="#e6e6e6" stroke-width="1"/>
<g font-family="Liberation Sans" font-size="10" fill="#c9c9c9">
<text x="98" y="11">60</text><text x="147.900" y="11">70</text><text x="197.900" y="11">80</text><text x="247.800" y="11">90</text><text x="297.800" y="11">100</text><text x="347.700" y="11">110</text><text x="397.600" y="11">120</text><text x="447.600" y="11">130</text><text x="497.500" y="11">140</text><text x="547.500" y="11">150</text><text x="597.400" y="11">160</text><text x="647.300" y="11">170</text><text x="697.300" y="11">180</text><text x="747.200" y="11">190</text><text x="797.200" y="11">200</text><text x="847.100" y="11">210</text><text x="897" y="11">220</text><text x="947" y="11">230</text><text x="996.900" y="11">240</text><text x="1046.900" y="11">250</text>
</g></svg>
<svg class="a" style="left:52px;top:227px" width="17" height="851" viewBox="0 0 17 851">
<defs><pattern id="vp" patternUnits="userSpaceOnUse" x="0" y="37.500" width="17" height="49.900"><path d="M0 .5h16M6 5.500h10M6 10.500h10M6 15.500h10M6 20.500h10M4 25.500h12M6 30.400h10M6 35.400h10M6 40.400h10M6 45.400h10" stroke="#e6e6e6" stroke-width="1" fill="none"/></pattern></defs>
<rect width="17" height="851" fill="url(#vp)"/>
<path d="M16.500 0V851" stroke="#e6e6e6"/>
<g font-family="Liberation Sans" font-size="10" fill="#c9c9c9">
<text transform="translate(11 36.500) rotate(-90)">210</text><text transform="translate(11 86.400) rotate(-90)">200</text><text transform="translate(11 136.300) rotate(-90)">190</text><text transform="translate(11 186.200) rotate(-90)">180</text><text transform="translate(11 236.100) rotate(-90)">170</text><text transform="translate(11 286) rotate(-90)">160</text><text transform="translate(11 335.900) rotate(-90)">150</text><text transform="translate(11 385.800) rotate(-90)">140</text><text transform="translate(11 435.700) rotate(-90)">130</text><text transform="translate(11 485.600) rotate(-90)">120</text><text transform="translate(11 535.500) rotate(-90)">110</text><text transform="translate(11 585.400) rotate(-90)">100</text><text transform="translate(11 635.300) rotate(-90)">90</text><text transform="translate(11 685.200) rotate(-90)">80</text><text transform="translate(11 735.100) rotate(-90)">70</text><text transform="translate(11 785) rotate(-90)">60</text><text transform="translate(11 834.900) rotate(-90)">50</text>
</g></svg>

<!-- v scrollbar -->
<div class="a" style="left:1059px;top:209px;width:17px;height:870px;background:#555"></div>
<div class="a" style="left:1060px;top:210px;width:14px;height:16px;background:#9a9a9a;border:1px solid #777"></div>
<div class="a" style="left:1060px;top:1063px;width:14px;height:15px;background:#9a9a9a;border:1px solid #777"></div>
<div class="a" style="left:1060px;top:463px;width:14px;height:292px;background:#989898;border:1px solid #6a6a6a"></div>
<svg class="a" style="left:1060px;top:210px" width="14" height="870" viewBox="0 0 14 870"><path d="M3 10h8L7 6zM3 858h8l-4 4z" fill="#222"/></svg>
<!-- h scrollbar -->
<div class="a" style="left:54px;top:1078px;width:1006px;height:16px;background:#555"></div>
<div class="a" style="left:55px;top:1080px;width:14px;height:14px;background:#9a9a9a;border:1px solid #777"></div>
<div class="a" style="left:1044px;top:1079px;width:15px;height:15px;background:#9a9a9a;border:1px solid #777"></div>
<div class="a" style="left:445px;top:1080px;width:229px;height:14px;background:#989898"></div>
<svg class="a" style="left:55px;top:1080px" width="1000" height="14" viewBox="0 0 1000 14"><path d="M8 3v8L4 7zM992 3v8l4-4z" fill="#222"/></svg>

<!-- page tabs -->
<div class="t" style="left:71px;top:1106px;color:#a6a6a6">页-1</div>
<div class="a" style="left:117px;top:1106px;width:1px;height:16px;background:#bdbdbd"></div>
<div class="t" style="left:137px;top:1106px;color:#f0f0f0;font-weight:bold">页-2</div>
<div class="a" style="left:182px;top:1106px;width:1px;height:16px;background:#bdbdbd"></div>
<div class="t" style="left:197px;top:1106px;color:#b0b0b0">全部</div>
<svg class="a" style="left:224px;top:1111px" width="10" height="6" viewBox="0 0 10 6"><path d="M1 5h8L5 1z" fill="#ccc"/></svg>
<div class="a" style="left:249px;top:1106px;width:1px;height:16px;background:#bdbdbd"></div>
<svg class="a" style="left:259px;top:1105px" width="18" height="18" viewBox="0 0 18 18" fill="none" stroke="#eee" stroke-width="1.400"><circle cx="9" cy="9" r="7.500"/><path d="M9 4.500v9M4.500 9h9" stroke-width="1.800"/></svg>
<svg class="a" style="left:1062px;top:1120px" width="14" height="12" viewBox="0 0 14 12" fill="#ddd"><circle cx="11" cy="2" r="1"/><circle cx="7" cy="6" r="1"/><circle cx="11" cy="6" r="1"/><circle cx="3" cy="10" r="1"/><circle cx="7" cy="10" r="1"/><circle cx="11" cy="10" r="1"/></svg>

<!-- status bar -->
<div class="a" style="left:0;top:1133px;width:1076px;height:2px;background:#4a4a4a"></div>
<div class="a" style="left:0;top:1156px;width:1076px;height:2px;background:#4a4a4a"></div>
<div class="t" style="left:2px;top:1137px;color:#f2f2f2">页面 2/2</div>
<div class="t" style="left:67px;top:1137px;color:#f2f2f2">中文(中国)</div>
<svg class="a" style="left:142px;top:1139px" width="16" height="15" viewBox="0 0 16 15"><circle cx="5" cy="4" r="3" fill="#ddd"/><rect x="4" y="4" width="11" height="10" fill="#555" stroke="#eee"/><path d="M6 8h7M6 10.500h7" stroke="#eee" stroke-dasharray="1 1"/></svg>
<div class="a" style="left:799px;top:1136px;width:38px;height:20px;background:#222"></div>
<svg class="a" style="left:809px;top:1138px" width="18" height="16" viewBox="0 0 18 16" fill="none" stroke="#eee" stroke-width="1.200"><path d="M1.500 1.500h15M3.500 1.500v8h11v-8M9 9.500v4M5.500 14.500h7"/></svg>
<svg class="a" style="left:840px;top:1136px" width="126" height="20" viewBox="0 0 126 20" fill="none" stroke="#f0f0f0"><path d="M2 10h6" stroke-width="2"/><path d="M12 10.500h106" stroke-width="1"/><path d="M55 7v7" stroke-width="1"/><rect x="66" y="5" width="4" height="11" fill="#f0f0f0" stroke="none"/><path d="M115 10h7M118.500 6.500v7" stroke-width="2"/></svg>
<div class="t" style="left:974px;top:1137px;font-size:13px;color:#f2f2f2">132%</div>
<svg class="a" style="left:1018px;top:1138px" width="50" height="17" viewBox="0 0 50 17" fill="none" stroke="#eee" stroke-width="1"><path d="M3.500 3.500h12v12h-12z"/><path d="M9.500 5v3M9.500 11v3M5 9.500h3M11 9.500h3"/><path d="M29.500 2.500h6v5h-6zM29.500 10.500h6v5h-6zM38.500 2.500h6M44.500 2.500v5M35.500 5h3"/></svg>
</body></html>
